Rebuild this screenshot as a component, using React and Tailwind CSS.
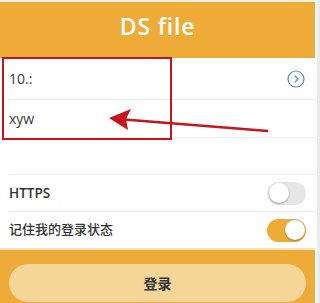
function Toggle({ on }) {
  return (
    <div
      className={`relative h-[23px] w-[39px] rounded-full ${
        on ? 'bg-[#efab38]' : 'bg-[#e6e6e6]'
      }`}
    >
      <div
        className={`absolute top-[1.5px] h-[20px] w-[20px] rounded-full bg-white shadow-[0_1px_2px_rgba(0,0,0,0.3)] ${
          on ? 'right-[1.5px]' : 'left-[1.5px]'
        }`}
      />
    </div>
  )
}

function Row({ children, height, last }) {
  return (
    <div className="pl-[9px]">
      <div
        className={`flex items-center justify-between pr-[9px] ${height} ${
          last ? '' : 'border-b border-[#ececec]'
        }`}
      >
        {children}
      </div>
    </div>
  )
}

export default function App() {
  return (
    <div
      className="relative flex h-[303px] w-[320px] overflow-hidden bg-white"
      style={{ fontFamily: '"Open Sans", "Noto Sans CJK SC", sans-serif' }}
    >
      <div className="flex w-[315px] flex-col">
        <div className="h-[2px] bg-[#f4f0e8]" />
        <header className="flex h-[56px] items-center justify-center bg-[#efab37] pb-[8px]">
          <h1 className="text-[23px] font-semibold tracking-[0.8px] text-white">DS file</h1>
        </header>

        <Row height="h-[42px]">
          <span className="text-[14px] text-[#3a3a3a]">10.:</span>
          <svg width="18" height="18" viewBox="0 0 18 18" className="mr-[1px]">
            <circle cx="9" cy="9" r="8" fill="none" stroke="#5b8db5" strokeWidth="1.2" />
            <path d="M7.8 5.8 L11 9 L7.8 12.2" fill="none" stroke="#5b8db5" strokeWidth="1.3" />
          </svg>
        </Row>
        <Row height="h-[38px]">
          <span className="text-[14px] text-[#3a3a3a]">xyw</span>
        </Row>
        <Row height="h-[37px]">
          <span />
        </Row>
        <Row height="h-[37px]">
          <span className="text-[13.5px] font-semibold text-[#333]">HTTPS</span>
          <Toggle on={false} />
        </Row>
        <Row height="h-[36px]" last>
          <span className="text-[13px] font-medium text-[#333]">记住我的登录状态</span>
          <Toggle on />
        </Row>

        <div className="h-[2px] bg-[#f6e3bf]" />
        <div className="flex flex-1 items-start bg-[#efab37] px-[9px] pt-[14px]">
          <button className="flex h-[38px] w-full items-center justify-center rounded-full bg-[#f6d598] text-[14px] font-semibold text-[#333]">
            登录
          </button>
        </div>
      </div>
      <div className="w-[5px] border-l-[2px] border-white bg-[#ebebeb]" />

      <div className="absolute left-[2px] top-[57px] h-[83px] w-[170px] border-2 border-[#c4161c]" />
      <svg
        className="absolute left-0 top-0"
        width="320"
        height="303"
        viewBox="0 0 320 303"
      >
        <line x1="268" y1="131" x2="118" y2="119" stroke="#c4161c" strokeWidth="2.4" />
        <path d="M109 118 L131 109 L126 119 L128 130 Z" fill="#c4161c" />
      </svg>
    </div>
  )
}
